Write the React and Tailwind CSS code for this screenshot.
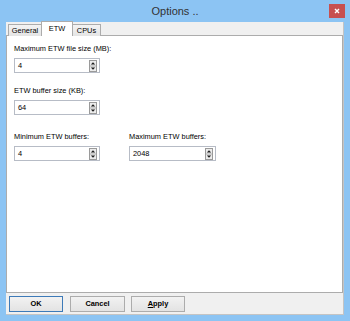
function Spinner() {
  return (
    <svg width="8" height="12" viewBox="0 0 8 12" className="block">
      <rect x="0.5" y="0.5" width="7" height="11" fill="#ececec" stroke="#9a9a9a" />
      <line x1="1" y1="6" x2="7" y2="6" stroke="#b0b0b0" strokeWidth="1" />
      <polygon points="1.8,4.6 4,2.2 6.2,4.6" fill="#1a1a1a" />
      <polygon points="1.8,7.4 4,9.8 6.2,7.4" fill="#1a1a1a" />
    </svg>
  );
}

function SpinBox({ value, w }) {
  return (
    <div className={`${w} h-[15px] border border-[#b7bcc6] bg-white flex items-center pl-[3px] pr-[2px]`}>
      <span className="leading-none">{value}</span>
      <div className="ml-auto">
        <Spinner />
      </div>
    </div>
  );
}

export default function App() {
  return (
    <div className="w-[350px] h-[321px] bg-[#8cc4f3] flex flex-col font-['Liberation_Sans',Arial,sans-serif] text-[7.4px] text-black overflow-hidden">
      <div className="h-[22px] relative flex items-center justify-center shrink-0">
        <span className="text-[11px] text-[#333333] leading-none">Options ..</span>
        <div className="absolute right-[5px] top-[4px] w-[16px] h-[14px] bg-[#c75050] flex items-center justify-center">
          <svg width="6" height="6" viewBox="0 0 6 6">
            <path d="M1 1 L5 5 M5 1 L1 5" stroke="#ffffff" strokeWidth="1.4" />
          </svg>
        </div>
      </div>

      <div className="flex-1 mx-[6px] mb-[6px] bg-[#f0f0f0] flex flex-col border-r border-b border-[#c4c4c4]">
        <div className="h-[14px] flex items-end pl-[2px] shrink-0 -mb-px relative z-10">
          <div className="w-[33px] h-[12px] border-l border-t border-[#acacac] bg-gradient-to-b from-[#f4f4f4] to-[#e4e4e4] flex items-center justify-center leading-none">
            General
          </div>
          <div className="w-[32px] h-[15px] border-l border-t border-r border-[#acacac] bg-white flex items-center justify-center leading-none pb-[1px]">
            ETW
          </div>
          <div className="w-[28px] h-[12px] border-t border-r border-[#acacac] bg-gradient-to-b from-[#f4f4f4] to-[#e4e4e4] flex items-center justify-center leading-none">
            CPUs
          </div>
        </div>

        <div className="flex-1 border border-[#acacac] bg-white pl-[7px] pt-[8px] flex flex-col">
          <div className="h-[10px] leading-[10px]">Maximum ETW file size (MB):</div>
          <div className="mt-[4px]">
            <SpinBox value="4" w="w-[86px]" />
          </div>
          <div className="h-[10px] leading-[10px] mt-[13px]">ETW buffer size (KB):</div>
          <div className="mt-[4px]">
            <SpinBox value="64" w="w-[86px]" />
          </div>
          <div className="flex gap-[29px] mt-[17px]">
            <div className="flex flex-col">
              <div className="h-[10px] leading-[10px]">Minimum ETW buffers:</div>
              <div className="mt-[4px]">
                <SpinBox value="4" w="w-[86px]" />
              </div>
            </div>
            <div className="flex flex-col">
              <div className="h-[10px] leading-[10px]">Maximum ETW buffers:</div>
              <div className="mt-[4px]">
                <SpinBox value="2048" w="w-[87px]" />
              </div>
            </div>
          </div>
        </div>

        <div className="flex pl-[3px] pt-[3px] pb-[2px] shrink-0">
          <button className="w-[54px] h-[16px] border border-[#3d7ab8] bg-gradient-to-b from-[#f2f2f2] to-[#e3e3e3] font-bold flex items-center justify-center leading-none">
            OK
          </button>
          <button className="ml-[7px] w-[55px] h-[16px] border border-[#acacac] bg-gradient-to-b from-[#f2f2f2] to-[#e3e3e3] font-bold flex items-center justify-center leading-none">
            Cancel
          </button>
          <button className="ml-[6px] w-[54px] h-[16px] border border-[#acacac] bg-gradient-to-b from-[#f2f2f2] to-[#e3e3e3] font-bold flex items-center justify-center leading-none">
            <span><span className="underline">A</span>pply</span>
          </button>
        </div>
      </div>
    </div>
  );
}
